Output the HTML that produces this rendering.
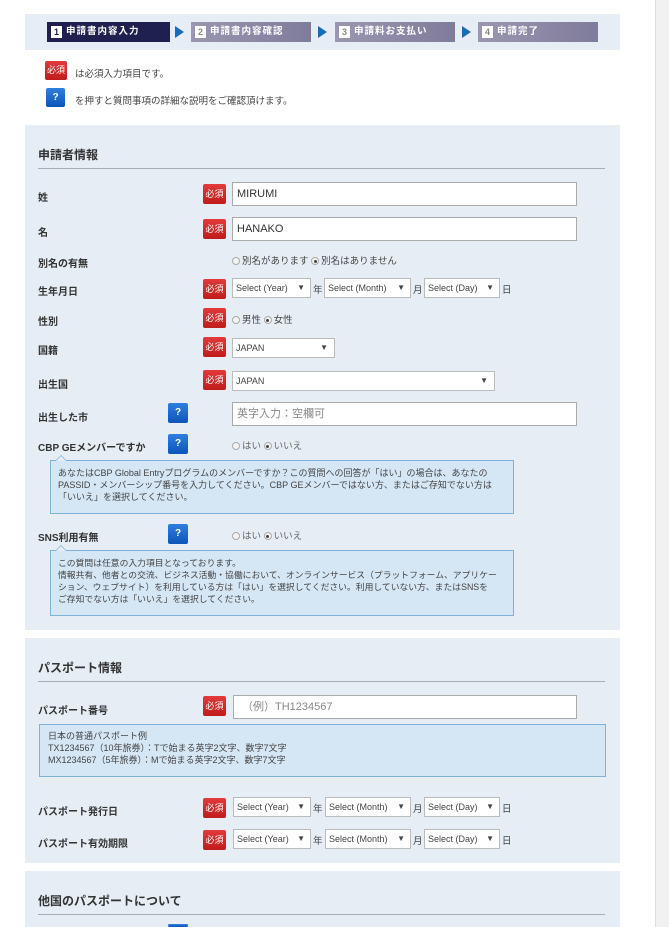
<!DOCTYPE html>
<html><head><meta charset="utf-8"><style>
*{margin:0;padding:0;box-sizing:border-box}
html,body{width:669px;height:927px;overflow:hidden}
body{background:#fff;position:relative;font-family:"Liberation Sans","Noto Sans CJK JP",sans-serif;color:#333;font-size:10px}
.a{position:absolute}
.sb{right:0;top:0;width:14px;height:927px;background:#f1f1f1;border-left:1px solid #ddd}
.sec{background:#e6edf4;left:25px;width:595px}
.step{height:20px;top:22px;color:#fff;font-size:9.5px;font-weight:bold;line-height:20px;padding-left:4px;letter-spacing:1px}
.step b{display:inline-block;width:11px;height:12px;background:#fff;color:#888;font-size:9px;line-height:12px;text-align:center;margin-right:4px;vertical-align:-1px;letter-spacing:0}
.arr{width:0;height:0;border-left:9px solid #1a6bb5;border-top:6px solid transparent;border-bottom:6px solid transparent;top:26px}
.req{width:23px;height:20px;background:linear-gradient(#e23a3a,#c01c1c);color:#fff;font-size:9px;line-height:20px;text-align:center;border-radius:2px}
.q{width:20px;height:20px;background:linear-gradient(#2f7fe0,#0d55b8);color:#fff;font-weight:bold;font-size:10px;line-height:20px;text-align:center;border-radius:2px}
.lbl{font-weight:bold;font-size:10px;color:#333;left:38px}
.h{font-weight:bold;font-size:12px;left:38px;color:#333}
.line{left:38px;width:567px;height:1px;background:#aab}
.inp{background:#fff;border:1px solid #aaa;height:24px;font-size:11px;line-height:22px;padding-left:4px;color:#333}
.sel{background:#fff;border:1px solid #bbb;height:20px;font-size:9px;line-height:18px;padding-left:3px;color:#444}
.sel i{position:absolute;right:5px;font-style:normal;font-size:8px}
.t{font-size:9.5px;color:#444}
.tip{left:50px;width:464px;background:#d5e6f5;border:1px solid #7fb2d8;font-size:9px;line-height:12px;color:#444;padding:6px 7px;white-space:nowrap;overflow:hidden}
.tip.p{overflow:visible}
.tip.p:before{content:"";position:absolute;left:4px;top:-6px;border-left:6px solid transparent;border-right:6px solid transparent;border-bottom:6px solid #7fb2d8}
.tip.p:after{content:"";position:absolute;left:5px;top:-5px;border-left:5px solid transparent;border-right:5px solid transparent;border-bottom:5px solid #e6edf4}
.rad{display:inline-block;width:8px;height:8px;border:1px solid #aaa;border-radius:50%;background:#f3f3f3;vertical-align:-1px;position:relative;margin-right:2px}
.rad.on:after{content:"";position:absolute;left:1.5px;top:1.5px;width:3px;height:3px;border-radius:50%;background:#444}
</style></head><body>
<div class="a sb"></div>
<div class="a sec" style="top:14px;height:36px"></div>
<div class="a step" style="left:47px;width:123px;background:#1f2050"><b style="color:#1f2050">1</b>申請書内容入力</div>
<div class="a arr" style="left:175px"></div>
<div class="a step" style="left:191px;width:120px;background:linear-gradient(90deg,#9a97b2,#7f7b9a)"><b>2</b>申請書内容確認</div>
<div class="a arr" style="left:318px"></div>
<div class="a step" style="left:335px;width:120px;background:linear-gradient(90deg,#9a97b2,#7f7b9a)"><b>3</b>申請料お支払い</div>
<div class="a arr" style="left:462px"></div>
<div class="a step" style="left:478px;width:120px;background:linear-gradient(90deg,#9a97b2,#7f7b9a)"><b>4</b>申請完了</div>

<div class="a req" style="left:45px;top:61px;width:22px;height:19px;line-height:19px">必須</div>
<div class="a t" style="left:75px;top:66px">は必須入力項目です。</div>
<div class="a q" style="left:46px;top:88px;width:19px;height:19px;line-height:19px">?</div>
<div class="a t" style="left:75px;top:93px">を押すと質問事項の詳細な説明をご確認頂けます。</div>

<div class="a sec" style="top:125px;height:505px"></div>
<div class="a h" style="top:146px">申請者情報</div>
<div class="a line" style="top:168px"></div>

<div class="a lbl" style="top:189px">姓</div>
<div class="a req" style="left:203px;top:184px">必須</div>
<div class="a inp" style="left:232px;top:182px;width:345px">MIRUMI</div>
<div class="a lbl" style="top:224px">名</div>
<div class="a req" style="left:203px;top:219px">必須</div>
<div class="a inp" style="left:232px;top:217px;width:345px">HANAKO</div>
<div class="a lbl" style="top:255px">別名の有無</div>
<div class="a t" style="left:232px;top:253px"><span class="rad"></span>別名があります <span class="rad on"></span>別名はありません</div>
<div class="a lbl" style="top:283px">生年月日</div>
<div class="a req" style="left:203px;top:279px">必須</div>
<div class="a sel" style="left:232px;top:278px;width:79px">Select (Year)<i>▼</i></div>
<div class="a t" style="left:313px;top:282px">年</div>
<div class="a sel" style="left:324px;top:278px;width:87px">Select (Month)<i>▼</i></div>
<div class="a t" style="left:413px;top:282px">月</div>
<div class="a sel" style="left:424px;top:278px;width:76px">Select (Day)<i>▼</i></div>
<div class="a t" style="left:502px;top:282px">日</div>
<div class="a lbl" style="top:313px">性別</div>
<div class="a req" style="left:203px;top:308px">必須</div>
<div class="a t" style="left:232px;top:312px"><span class="rad"></span>男性 <span class="rad on"></span>女性</div>
<div class="a lbl" style="top:342px">国籍</div>
<div class="a req" style="left:203px;top:337px">必須</div>
<div class="a sel" style="left:232px;top:338px;width:103px">JAPAN<i style="right:6px">▼</i></div>
<div class="a lbl" style="top:376px">出生国</div>
<div class="a req" style="left:203px;top:370px">必須</div>
<div class="a sel" style="left:232px;top:371px;width:263px">JAPAN<i style="right:6px">▼</i></div>
<div class="a lbl" style="top:409px">出生した市</div>
<div class="a q" style="left:168px;top:403px">?</div>
<div class="a inp" style="left:232px;top:402px;width:345px;color:#888">英字入力：空欄可</div>
<div class="a lbl" style="top:439px">CBP GEメンバーですか</div>
<div class="a q" style="left:168px;top:434px">?</div>
<div class="a t" style="left:232px;top:438px;color:#666"><span class="rad"></span>はい <span class="rad on"></span>いいえ</div>
<div class="a tip p" style="top:460px;height:54px">あなたはCBP Global Entryプログラムのメンバーですか？この質問への回答が「はい」の場合は、あなたの<br>PASSID・メンバーシップ番号を入力してください。CBP GEメンバーではない方、またはご存知でない方は<br>「いいえ」を選択してください。</div>
<div class="a lbl" style="top:529px">SNS利用有無</div>
<div class="a q" style="left:168px;top:524px">?</div>
<div class="a t" style="left:232px;top:528px;color:#666"><span class="rad"></span>はい <span class="rad on"></span>いいえ</div>
<div class="a tip p" style="top:550px;height:66px;font-size:8.8px">この質問は任意の入力項目となっております。<br>情報共有、他者との交流、ビジネス活動・協働において、オンラインサービス（プラットフォーム、アプリケー<br>ション、ウェブサイト）を利用している方は「はい」を選択してください。利用していない方、またはSNSを<br>ご存知でない方は「いいえ」を選択してください。</div>

<div class="a sec" style="top:638px;height:225px"></div>
<div class="a h" style="top:659px">パスポート情報</div>
<div class="a line" style="top:681px"></div>
<div class="a lbl" style="top:702px">パスポート番号</div>
<div class="a req" style="left:203px;top:696px">必須</div>
<div class="a inp" style="left:233px;top:695px;width:344px;color:#888;padding-left:8px">（例）TH1234567</div>
<div class="a tip" style="left:39px;width:567px;top:724px;height:53px;padding:5px 8px;line-height:12px">日本の普通パスポート例<br>TX1234567（10年旅券）：Tで始まる英字2文字、数字7文字<br>MX1234567（5年旅券）：Mで始まる英字2文字、数字7文字</div>
<div class="a lbl" style="top:803px">パスポート発行日</div>
<div class="a req" style="left:203px;top:798px">必須</div>
<div class="a sel" style="left:233px;top:797px;width:78px">Select (Year)<i>▼</i></div>
<div class="a t" style="left:313px;top:801px">年</div>
<div class="a sel" style="left:325px;top:797px;width:86px">Select (Month)<i>▼</i></div>
<div class="a t" style="left:413px;top:801px">月</div>
<div class="a sel" style="left:424px;top:797px;width:76px">Select (Day)<i>▼</i></div>
<div class="a t" style="left:502px;top:801px">日</div>
<div class="a lbl" style="top:835px">パスポート有効期限</div>
<div class="a req" style="left:203px;top:830px">必須</div>
<div class="a sel" style="left:233px;top:829px;width:78px">Select (Year)<i>▼</i></div>
<div class="a t" style="left:313px;top:833px">年</div>
<div class="a sel" style="left:325px;top:829px;width:86px">Select (Month)<i>▼</i></div>
<div class="a t" style="left:413px;top:833px">月</div>
<div class="a sel" style="left:424px;top:829px;width:76px">Select (Day)<i>▼</i></div>
<div class="a t" style="left:502px;top:833px">日</div>

<div class="a sec" style="top:871px;height:56px"></div>
<div class="a h" style="top:892px">他国のパスポートについて</div>
<div class="a line" style="top:914px"></div>
<div class="a q" style="left:168px;top:924px;height:3px"></div>
</body></html>
